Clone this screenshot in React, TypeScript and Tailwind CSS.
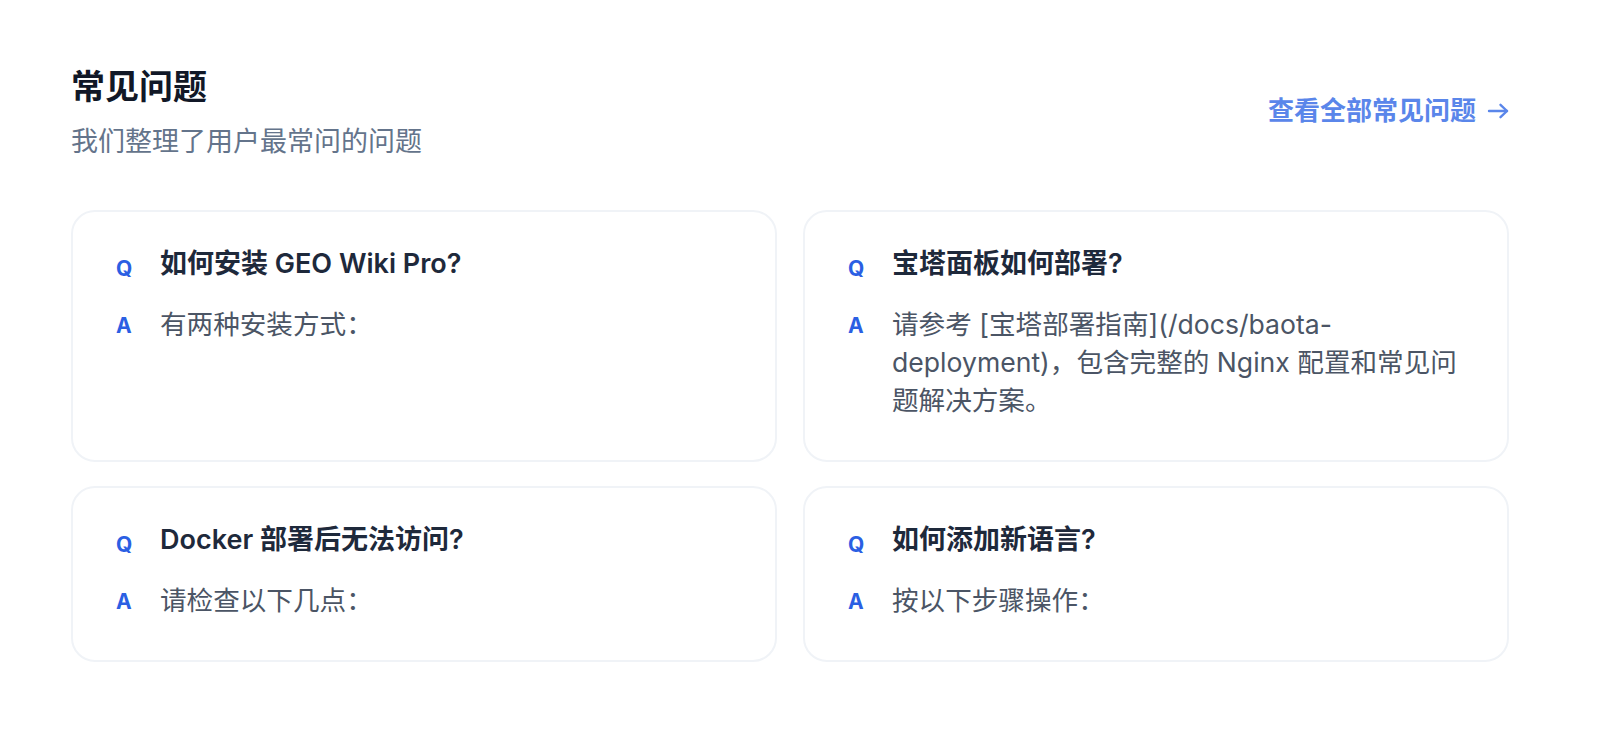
const FAQS = [
  {
    q: "如何安装 GEO Wiki Pro?",
    a: "有两种安装方式：",
  },
  {
    q: "宝塔面板如何部署?",
    a: "请参考 [宝塔部署指南](/docs/baota-deployment)，包含完整的 Nginx 配置和常见问题解决方案。",
  },
  {
    q: "Docker 部署后无法访问?",
    a: "请检查以下几点：",
  },
  {
    q: "如何添加新语言?",
    a: "按以下步骤操作：",
  },
];

function ArrowRight() {
  return (
    <svg width="22" height="16" viewBox="0 0 22 16" fill="none" stroke="currentColor" strokeWidth="2.4" strokeLinecap="round" strokeLinejoin="round">
      <path d="M2 8h18" />
      <path d="M13.5 1.8 20 8l-6.5 6.2" />
    </svg>
  );
}

function FaqCard({ q, a }: { q: string; a: string }) {
  return (
    <div className="rounded-3xl border-2 border-[#f0f3f7] bg-white pt-[33px] pb-[41px] pl-[43px] pr-[38px]">
      <div className="flex items-start">
        <span className="mt-[10px] w-[44px] shrink-0 text-[21px] leading-[28px] font-bold text-[#2b5fe3]">Q</span>
        <h3 className="text-[27px] leading-[37px] font-semibold text-[#1e293b]">{q}</h3>
      </div>
      <div className="mt-[22px] flex items-start">
        <span className="mt-[7px] w-[44px] shrink-0 text-[21px] leading-[28px] font-bold text-[#2b5fe3]">A</span>
        <p className="text-[26.6px] leading-[38px] text-[#4b5565]">{a}</p>
      </div>
    </div>
  );
}

export default function App() {
  return (
    <div className="min-h-screen bg-white font-['Inter','Noto_Sans_CJK_SC',sans-serif]">
      <div className="pt-[64px] pb-[77px] pl-[71px] pr-[89px]">
        <div className="flex items-center justify-between">
          <div>
            <h2 className="text-[34px] leading-[46px] font-bold text-[#111827]">常见问题</h2>
            <p className="mt-[13px] text-[27px] leading-[38px] text-[#64748b]">我们整理了用户最常问的问题</p>
          </div>
          <a href="#" className="-mt-[4px] flex items-center gap-[11px] text-[26px] leading-[36px] font-semibold text-[#5a86ea]">
            查看全部常见问题
            <ArrowRight />
          </a>
        </div>
        <div className="mt-[49px] grid grid-cols-2 gap-x-[26px] gap-y-[24px]">
          {FAQS.map((f) => (
            <FaqCard key={f.q} q={f.q} a={f.a} />
          ))}
        </div>
      </div>
    </div>
  );
}
